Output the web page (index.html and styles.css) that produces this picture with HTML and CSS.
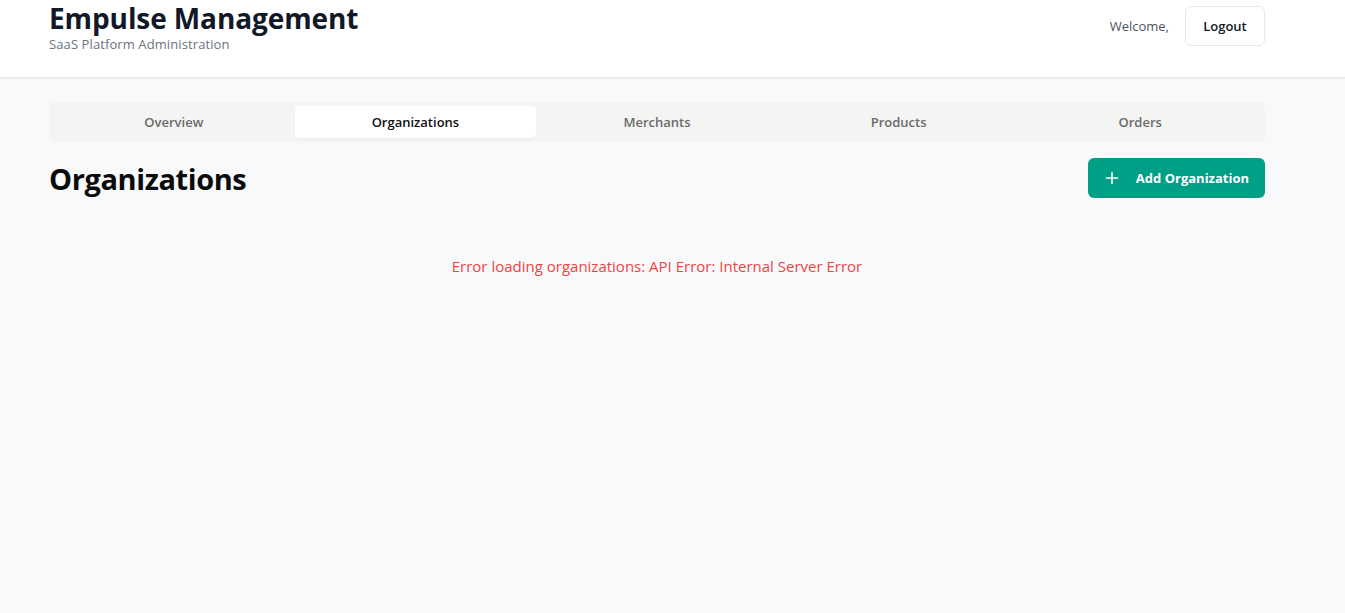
FILE: index.html
```html
<!DOCTYPE html>
<html lang="en">
<head>
<meta charset="utf-8">
<title>Empulse Management</title>
<link rel="stylesheet" href="styles.css">
</head>
<body>
<header class="topbar">
  <div class="container topbar-inner">
    <div class="brand">
      <h1 class="brand-title">Empulse Management</h1>
      <p class="brand-sub">SaaS Platform Administration</p>
    </div>
    <div class="user">
      <span class="welcome">Welcome,</span>
      <button class="btn-outline">Logout</button>
    </div>
  </div>
</header>
<main class="container main">
  <nav class="tabs">
    <div class="tab">Overview</div>
    <div class="tab active">Organizations</div>
    <div class="tab">Merchants</div>
    <div class="tab">Products</div>
    <div class="tab">Orders</div>
  </nav>
  <div class="section-head">
    <h2 class="section-title">Organizations</h2>
    <button class="btn-primary">
      <svg class="plus" width="16" height="16" viewBox="0 0 16 16" fill="none" stroke="currentColor" stroke-width="1.6" stroke-linecap="round"><path d="M8 2.5v11M2.5 8h11"/></svg>
      <span>Add Organization</span>
    </button>
  </div>
  <p class="error">Error loading organizations: API Error: Internal Server Error</p>
</main>
</body>
</html>
```
FILE: styles.css
```css
* { box-sizing: border-box; }
html, body { margin: 0; padding: 0; }
body {
  background: #f8f9fb;
  font-family: "Open Sans", "Noto Sans", "Liberation Sans", sans-serif;
  color: #111827;
}
.container {
  width: 1216px;
  margin-left: 49px;
}
.topbar {
  background: #ffffff;
  border-bottom: 1px solid #e5e7eb;
  box-shadow: 0 1px 2px rgba(0,0,0,0.05);
  height: 78px;
}
.topbar-inner {
  display: flex;
  justify-content: space-between;
  align-items: flex-start;
}
.brand-title {
  margin: 0;
  font-size: 28px;
  line-height: 36px;
  font-weight: 700;
  color: #111827;
  letter-spacing: -0.1px;
}
.brand-sub {
  margin: -1px 0 0;
  font-size: 13px;
  line-height: 18px;
  color: #6b7280;
  letter-spacing: 0.1px;
}
.user {
  display: flex;
  align-items: center;
  gap: 16px;
  padding-top: 6px;
}
.welcome {
  font-size: 13px;
  color: #4b5563;
}
.btn-outline {
  height: 40px;
  width: 80px;
  background: #fff;
  border: 1px solid #e5e7eb;
  border-radius: 6px;
  font-family: inherit;
  font-size: 13px;
  font-weight: 600;
  color: #111827;
}
.main {
  padding-top: 24px;
}
.tabs {
  display: grid;
  grid-template-columns: repeat(5, 1fr);
  background: #f4f4f2;
  border-radius: 6px;
  padding: 4px;
  height: 40px;
}
.tab {
  display: flex;
  align-items: center;
  justify-content: center;
  font-size: 13px;
  font-weight: 600;
  color: #6b6b6b;
  border-radius: 4px;
}
.tab.active {
  background: #ffffff;
  color: #111111;
  box-shadow: 0 1px 2px rgba(0,0,0,0.04);
}
.section-head {
  display: flex;
  justify-content: space-between;
  align-items: center;
  margin-top: 16px;
}
.section-title {
  margin: 0;
  font-size: 29px;
  font-weight: 700;
  color: #0b0b0b;
  letter-spacing: -0.4px;
}
.btn-primary {
  display: flex;
  align-items: center;
  gap: 16px;
  height: 40px;
  padding: 0 16px 0 16px;
  background: #00a086;
  color: #fff;
  border: none;
  border-radius: 6px;
  font-family: inherit;
  font-size: 13px;
  font-weight: 700;
}
.error {
  text-align: center;
  color: #ef4444;
  font-size: 15px;
  margin: 58px 0 0;
}
```
